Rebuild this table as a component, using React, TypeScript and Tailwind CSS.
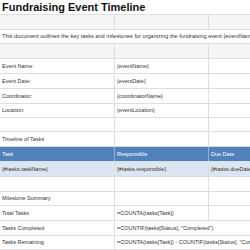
import React from "react";

type Row = {
  h: string;
  cells?: [string, string, string];
  span?: string;
  bg?: string;
  kind?: "title" | "head" | "data";
  noLine2?: boolean;
};

const rows: Row[] = [
  { h: "h-[15px]", span: "Fundraising Event Timeline", kind: "title" },
  { h: "h-[15px]", cells: ["", "", ""], bg: "bg-[#f5f5f5]" },
  { h: "h-[14px]", span: "This document outlines the key tasks and milestones for organizing the fundraising event {eventName}" },
  { h: "h-[15px]", cells: ["", "", ""], bg: "bg-[#f5f5f5]" },
  { h: "h-[15px]", cells: ["Event Name:", "{eventName}", ""] },
  { h: "h-[15px]", cells: ["Event Date:", "{eventDate}", ""] },
  { h: "h-[15px]", cells: ["Coordinator:", "{coordinatorName}", ""] },
  { h: "h-[14px]", cells: ["Location:", "{eventLocation}", ""] },
  { h: "h-[14px]", cells: ["", "", ""] },
  { h: "h-[15px]", cells: ["Timeline of Tasks", "", ""] },
  { h: "h-[15px]", cells: ["Task", "Responsible", "Due Date"], kind: "head" },
  { h: "h-[15px]", cells: ["{#tasks.taskName}", "{#tasks.responsible}", "{#tasks.dueDate}"], kind: "data" },
  { h: "h-[15px]", cells: ["", "", ""] },
  { h: "h-[14px]", cells: ["Milestone Summary", "", ""] },
  { h: "h-[15px]", cells: ["Total Tasks", "=COUNTA(tasks[Task])", ""] },
  { h: "h-[15px]", cells: ["Tasks Completed", "=COUNTIF(tasks[Status], \"Completed\")", ""], noLine2: true },
  { h: "h-[14px]", cells: ["Tasks Remaining", "=COUNTA(tasks[Task]) - COUNTIF(tasks[Status], \"Completed\")", ""], noLine2: true },
];

export default function App() {
  return (
    <div className="w-[250px] h-[250px] overflow-hidden bg-white text-[#333333] font-['Liberation_Sans',Arial,sans-serif]">
      {rows.map((row, i) => {
        if (row.span !== undefined) {
          return (
            <div
              key={i}
              className={`${row.h} flex items-center px-[2px] border-b border-[#dedede] whitespace-nowrap overflow-hidden ${
                row.kind === "title" ? "text-[11px] font-bold text-[#111111]" : "text-[5.6px]"
              }`}
            >
              {row.span}
            </div>
          );
        }
        const c = row.cells!;
        const rowBg =
          row.kind === "head" ? "bg-[#4f81bd] text-white" : row.kind === "data" ? "bg-[#dce6f1]" : row.bg ?? "";
        const line = row.kind === "head" ? "border-[#8fb0d8]" : "border-[#dedede]";
        return (
          <div key={i} className={`${row.h} flex border-b border-[#dedede] text-[5.5px] ${rowBg}`}>
            <div className={`w-[115px] shrink-0 border-r ${line} flex items-center px-[2px] whitespace-nowrap`}>
              {c[0]}
            </div>
            <div
              className={`w-[94px] shrink-0 flex items-center px-[2px] whitespace-nowrap ${
                row.noLine2 ? "" : `border-r ${line}`
              }`}
            >
              {c[1]}
            </div>
            <div className="flex-1 flex items-center px-[2px] whitespace-nowrap overflow-hidden">{c[2]}</div>
          </div>
        );
      })}
    </div>
  );
}
